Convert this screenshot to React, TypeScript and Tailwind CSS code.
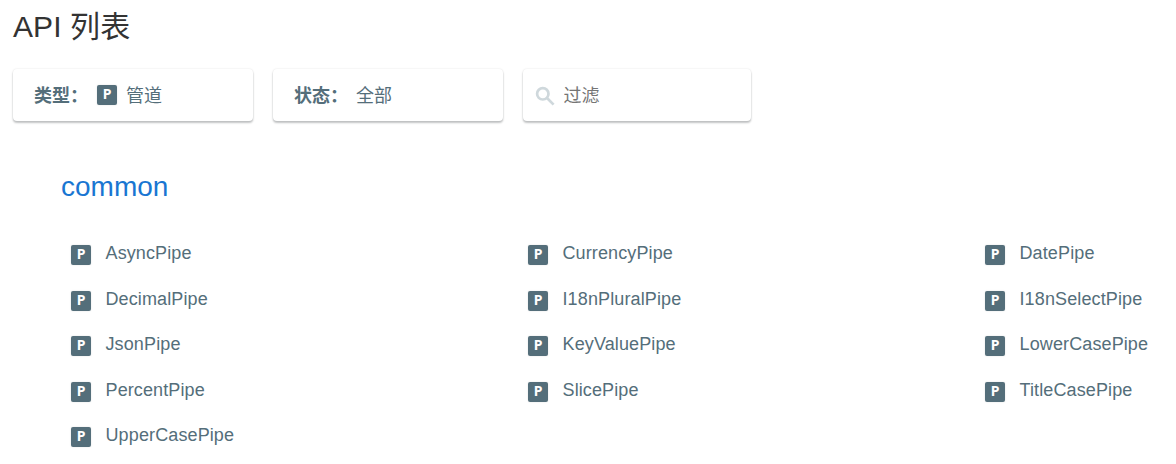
const groups = [
  'AsyncPipe', 'CurrencyPipe', 'DatePipe',
  'DecimalPipe', 'I18nPluralPipe', 'I18nSelectPipe',
  'JsonPipe', 'KeyValuePipe', 'LowerCasePipe',
  'PercentPipe', 'SlicePipe', 'TitleCasePipe',
  'UpperCasePipe',
];

const card =
  "flex h-[52px] items-center rounded-[4px] bg-white text-[18px] shadow-[0_2px_2px_rgba(10,16,20,0.24),0_0_2px_rgba(10,16,20,0.12)]";

function PipeBadge() {
  return (
    <span className="block h-5 w-5 shrink-0 rounded-[2px] bg-[#546e7a] text-center font-['Noto_Sans',sans-serif] text-[14px] leading-[17px] font-bold text-white shadow-[0_0_2px_rgba(10,16,20,0.12)]">
      P
    </span>
  );
}

export default function App() {
  return (
    <main className="h-[464px] w-[1176px] overflow-hidden bg-white pl-[13px] font-['Liberation_Sans','Noto_Sans_CJK_SC',sans-serif] text-[#546e7a]">
      <h1 className="h-[69px] pt-[7px] text-[30px] leading-[40px] font-normal tracking-[0.1px] text-[#333]">API 列表</h1>
      <div className="flex">
        <button className={`${card} mr-[20px] w-[240px] pl-[21px]`}>
          <strong className="w-[63px] pt-[2px] text-left font-bold whitespace-nowrap">类型：</strong>
          <PipeBadge />
          <span className="ml-[9px] pt-[2px] font-normal">管道</span>
        </button>
        <button className={`${card} mr-[20px] w-[230px] pl-[21px]`}>
          <strong className="w-[62px] pt-[2px] text-left font-bold whitespace-nowrap">状态：</strong>
          <span className="pt-[2px] font-normal">全部</span>
        </button>
        <label className={`${card} w-[228px] pl-[10px]`}>
          <svg className="mt-[2px] h-6 w-6 fill-none stroke-[#cfd8dc]" strokeWidth="2.7" viewBox="0 0 24 24">
            <circle cx="9.8" cy="9.8" r="5.7" />
            <path d="M14 14l6.6 6.6" />
          </svg>
          <input placeholder="过滤" className="ml-[6.5px] w-[160px] pt-[2px] font-normal outline-none placeholder:text-[#757575]" />
        </label>
      </div>
      <section className="pt-[50px] pl-[48px]">
        <h2 className="text-[28px] leading-[32px] text-[#1976d2]">common</h2>
        <ul className="mt-[28px] grid auto-rows-[45.5px] grid-cols-[457px_457px_190px] pl-[10px]">
          {groups.map((name) => (
            <li key={name} className="flex items-start pt-[14px]">
              <PipeBadge />
              <a className="-mt-[4px] ml-[14.5px] text-[18px] leading-6 tracking-[0.12px]">{name}</a>
            </li>
          ))}
        </ul>
      </section>
    </main>
  );
}
